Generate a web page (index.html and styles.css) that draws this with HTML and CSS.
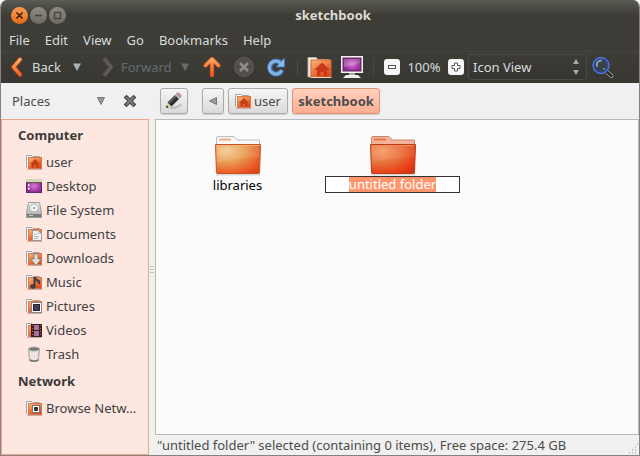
FILE: index.html
```html
<!DOCTYPE html>
<html lang="en">
<head>
<meta charset="utf-8">
<title>sketchbook</title>
<link rel="stylesheet" href="styles.css">
</head>
<body>
<svg class="defs" aria-hidden="true">
  <defs>
    <linearGradient id="orange" x1="0" y1="0" x2="0.6" y2="1"><stop offset="0" stop-color="#f8b77d"/><stop offset="0.5" stop-color="#ee8146"/><stop offset="1" stop-color="#e04a18"/></linearGradient>
    <linearGradient id="arrow" gradientUnits="userSpaceOnUse" x1="0" y1="2" x2="0" y2="20"><stop offset="0" stop-color="#fbb16b"/><stop offset="1" stop-color="#f05a20"/></linearGradient>
    <radialGradient id="purple"><stop offset="0" stop-color="#df78d8"/><stop offset="1" stop-color="#8c2c91"/></radialGradient>
    <linearGradient id="metal" x1="0" y1="0" x2="0" y2="1"><stop offset="0" stop-color="#f5f5f3"/><stop offset="1" stop-color="#a5a5a3"/></linearGradient>
    <radialGradient id="folderGlow" cx="0.25" cy="0.22" r="0.95"><stop offset="0" stop-color="#f5cd93"/><stop offset="0.45" stop-color="#e89850"/><stop offset="0.85" stop-color="#ea5522"/><stop offset="1" stop-color="#d8481a"/></radialGradient>
    <radialGradient id="folderHot" cx="0.25" cy="0.22" r="0.95"><stop offset="0" stop-color="#f59a66"/><stop offset="0.45" stop-color="#e8703a"/><stop offset="0.85" stop-color="#e83c14"/><stop offset="1" stop-color="#d63410"/></radialGradient>
    <symbol id="place" viewBox="0 0 16 16">
      <path d="M.5 13.500V1.500H6l1 1h6.500V6" fill="#fff" stroke="#a9a09c"/>
      <rect x="2.500" y="3.500" width="13" height="11" fill="url(#orange)" stroke="#d87950"/>
      <path d="M1 15.500h15" stroke="#c9b0a6"/>
    </symbol>
    <symbol id="home" viewBox="0 0 16 16"><use href="#place"/><path d="M9 5l5 5h-1.500v3.500h-2.500v-2.500h-2v2.500H5.500V10H4z" fill="#c33d16"/></symbol>
  </defs>
</svg>
<div class="window">
  <header class="titlebar">
    <div class="controls">
      <button class="control close" aria-label="Close"><svg width="17" height="17" viewBox="0 0 17 17"><path d="M5.500 5.500l6 6m0-6l-6 6" stroke="#301b0d" stroke-width="1.500"/></svg></button>
      <button class="control" aria-label="Minimize"><svg width="17" height="17" viewBox="0 0 17 17"><path d="M5 8.500h7" stroke="#44433e" stroke-width="1.400"/></svg></button>
      <button class="control" aria-label="Maximize"><svg width="17" height="17" viewBox="0 0 17 17"><rect x="5.500" y="5.500" width="6" height="6" fill="none" stroke="#44433e" stroke-width="1.400"/></svg></button>
    </div>
    <h1 class="title">sketchbook</h1>
    <div></div>
  </header>
  <nav class="menubar" aria-label="Menu">
    <button>File</button><button>Edit</button><button>View</button><button>Go</button><button>Bookmarks</button><button>Help</button>
  </nav>
  <div class="toolbar">
    <button class="nav back"><svg width="14" height="20" viewBox="0 0 14 20"><path d="M11 2.500L4.500 10l6.500 7.500" fill="none" stroke="#c54316" stroke-width="4.500" stroke-linecap="round" stroke-linejoin="round"/><path d="M11 2.500L4.500 10l6.500 7.500" fill="none" stroke="url(#arrow)" stroke-width="3" stroke-linecap="round" stroke-linejoin="round"/></svg><span>Back</span></button>
    <button class="drop" aria-label="Back history"><svg width="8" height="8" viewBox="0 0 8 8"><path d="M0 .5h8L4 8z" fill="#a9b3b5"/></svg></button>
    <button class="nav forward" disabled><svg width="14" height="20" viewBox="0 0 14 20"><path d="M4 2.500l6 7.500-6 7.500" fill="none" stroke="#5e5954" stroke-width="4" stroke-linecap="round" stroke-linejoin="round"/></svg><span>Forward</span></button>
    <button class="drop" aria-label="Forward history" disabled><svg width="8" height="8" viewBox="0 0 8 8"><path d="M0 .5h8L4 8z" fill="#626d70"/></svg></button>
    <button class="tool" aria-label="Up"><svg width="20" height="24" viewBox="0 0 20 24"><path d="M3.500 10.500L10 4l6.500 6.500M10 5v15" fill="none" stroke="#c54b1d" stroke-width="4.400" stroke-linecap="round" stroke-linejoin="round"/><path d="M3.500 10.500L10 4l6.500 6.500M10 5v15" fill="none" stroke="url(#arrow)" stroke-width="3" stroke-linecap="round" stroke-linejoin="round"/></svg></button>
    <button class="tool" aria-label="Stop" disabled><svg width="22" height="22" viewBox="0 0 22 22"><circle cx="11" cy="11" r="9.500" fill="#544f4b" stroke="#625c57"/><path d="M7 7l8 8m0-8l-8 8" stroke="#8f8b86" stroke-width="2.600"/></svg></button>
    <button class="tool" aria-label="Reload"><svg width="20" height="22" viewBox="0 0 20 22"><path d="M15 7A6.500 6.500 0 1 0 16 14.500" fill="none" stroke="#3f79b6" stroke-width="5"/><path d="M18.500 2v9H10z" fill="#8dbbeb" stroke="#3f79b6"/><path d="M14.500 7A6.500 6.500 0 1 0 15.800 14" fill="none" stroke="#83b3e6" stroke-width="3.200"/></svg></button>
    <i class="separator"></i>
    <button class="tool" aria-label="Home"><svg width="26" height="24" viewBox="0 0 26 24"><path d="M1 22V2.500h8l2 2h10.500V8H4v14z" fill="#f3f1ee" stroke="#b8aaa1"/><rect x="4" y="5" width="20" height="17.500" fill="url(#orange)" stroke="#df652f"/><path d="M4 22.500h20" stroke="#e9ded4"/><path d="M15 7.500l8 7.500h-3v6h-3.500v-4h-3v4H10v-6H7z" fill="#c83a18"/></svg></button>
    <button class="tool" aria-label="Computer"><svg width="24" height="24" viewBox="0 0 24 24"><rect x="1" y="1" width="22" height="17" fill="#f3f3f1"/><rect x="3" y="3" width="18" height="13" fill="url(#purple)" stroke="#682168"/><path d="M4 4h16v4L4 12z" fill="#fff" opacity=".18"/><path d="M9 18h6v2H9z" fill="#aaa"/><path d="M6 20h12l3 3H3z" fill="#f0f0ee"/></svg></button>
    <i class="separator"></i>
    <button class="zoom" aria-label="Zoom out"><svg width="16" height="16" viewBox="0 0 16 16"><rect x="4.500" y="6.500" width="7" height="3" fill="#fff" stroke="#555"/></svg></button>
    <span class="percent">100%</span>
    <button class="zoom" aria-label="Zoom in"><svg width="16" height="16" viewBox="0 0 16 16"><path d="M6.500 4h3v2.500H12v3H9.500V12h-3V9.500H4v-3h2.500z" fill="#fff" stroke="#555"/></svg></button>
    <label class="view"><select aria-label="View mode"><option>Icon View</option><option>List View</option><option>Compact View</option></select><svg width="6" height="16" viewBox="0 0 6 16"><path d="M3 0l3 5H0zM0 11h6l-3 5z" fill="#a5adae"/></svg></label>
    <button class="tool" aria-label="Search"><svg width="24" height="24" viewBox="0 0 24 24"><path d="M15 16l5.500 5" stroke="#aaa" stroke-width="4" stroke-linecap="round"/><path d="M15.500 16.500l5 4.500" stroke="#25282c" stroke-width="2.500" stroke-linecap="round"/><circle cx="10" cy="10.500" r="7.500" fill="#394149" stroke="#254bb0" stroke-width="2.400"/><circle cx="10" cy="10.500" r="8" fill="none" stroke="#7292dc" stroke-width=".8"/><path d="M6 11q-1-5 4-5.500" fill="none" stroke="#899aa9" stroke-width="2" stroke-linecap="round"/><circle cx="13" cy="14" r="1.200" fill="#697986"/></svg></button>
  </div>
  <div class="body">
    <aside class="side">
      <div class="sidehead">
        <button class="chooser"><span>Places</span><svg width="8" height="8" viewBox="0 0 8 8"><path d="M.5.500h7L4 7.500z" fill="#999" stroke="#777"/></svg></button>
        <button class="hide" aria-label="Close sidebar"><svg width="14" height="14" viewBox="0 0 14 14"><path d="M3.500 3.500l7 7m0-7l-7 7" stroke="#484b4b" stroke-width="4" stroke-linecap="square"/><path d="M3 3l8 8m0-8l-8 8" stroke="#777a7a" stroke-width="2"/></svg></button>
      </div>
      <nav class="places" aria-label="Places">
        <h2>Computer</h2>
        <a href="#"><svg viewBox="0 0 16 16"><use href="#home"/></svg><span>user</span></a>
        <a href="#"><svg viewBox="0 0 16 16"><rect x=".5" y="1.500" width="15" height="13" fill="url(#purple)" stroke="#6b236f"/><path d="M0 1h16v3H0z" fill="#d8d5bd"/><path d="M0 4.500h16" stroke="#59632d"/><path d="M2 6h1.500v2H2zm0 3.500h1.500v2H2z" fill="#fff"/></svg><span>Desktop</span></a>
        <a href="#"><svg viewBox="0 0 16 16"><path d="M2.500.500h11l2 11v4H.5v-4z" fill="url(#metal)" stroke="#999b99"/><ellipse cx="8" cy="6" rx="4.500" ry="4" fill="#f0f0ed" stroke="#aaa"/><circle cx="8" cy="6" r="1" fill="#999"/><path d="M1 12h14v3H1z" fill="#777a78"/><path d="M3 13.500h4" stroke="#ccc"/></svg><span>File System</span></a>
        <a href="#"><svg viewBox="0 0 16 16"><use href="#place"/><path d="M6.500 4.500h6l3 3v7h-9z" fill="#f3f3f1" stroke="#999"/><path d="M12.500 4.500v3h3M8 8h3m-3 2.500h5m-5 2h4" fill="none" stroke="#b3b3b1"/></svg><span>Documents</span></a>
        <a href="#"><svg viewBox="0 0 16 16"><use href="#place"/><path d="M8 4h4v5h3.500L10 15.500 4.500 9H8z" fill="#dededb" stroke="#777" stroke-width=".8"/></svg><span>Downloads</span></a>
        <a href="#"><svg viewBox="0 0 16 16"><use href="#place"/><path d="M8.500 12V3q1 3 4.500 4v3" fill="none" stroke="#343636" stroke-width="1.800"/><ellipse cx="7" cy="12.500" rx="2.700" ry="2.200" fill="#3d4141"/><path d="M9 3v3l4 4V6z" fill="#454848"/></svg><span>Music</span></a>
        <a href="#"><svg viewBox="0 0 16 16"><use href="#place"/><rect x="5.500" y="4.500" width="10" height="10" fill="#fff" stroke="#888"/><rect x="7.500" y="6.500" width="6" height="6" fill="#4b3b61" stroke="#292433"/></svg><span>Pictures</span></a>
        <a href="#"><svg viewBox="0 0 16 16"><use href="#place"/><path d="M5 2h11v13H5z" fill="#3b201d"/><path d="M8 3h5v5H8zm0 6h5v5H8z" fill="#a573a3"/><path d="M6.500 3v12M14.500 3v12" stroke="#e85e2a" stroke-dasharray="1 2"/></svg><span>Videos</span></a>
        <a href="#"><svg viewBox="0 0 16 16"><path d="M2.500 3l1 11q4.500 2 9 0l1-11z" fill="#e2ddd8" stroke="#a4a4a1"/><path d="M4.500 6v7M7 6v8M9.500 6v8" stroke="#f9eee8"/><ellipse cx="8" cy="3" rx="5.500" ry="2" fill="#707673" stroke="#b5b8b5"/><path d="M3.500 14q4.500 2.500 9 0" fill="none" stroke="#777" stroke-width="1.500"/></svg><span>Trash</span></a>
        <h2>Network</h2>
        <a href="#"><svg viewBox="0 0 16 16"><use href="#place"/><rect x="6.500" y="5.500" width="7" height="7" fill="#fff" stroke="#777"/><path d="M8.500 7.500h3v3h-3z" fill="#303432" stroke="#303432"/></svg><span>Browse Netw…</span></a>
      </nav>
    </aside>
    <div class="splitter"><i></i><i></i><i></i></div>
    <main class="main">
      <div class="pathbar">
        <button class="path edit" aria-label="Edit location"><svg width="20" height="20" viewBox="0 0 20 20"><path d="M6 17q9 0 11-4" fill="none" stroke="#bdbdbd" stroke-width="2"/><path d="M2 17l1.500-5.500 4 4z" fill="#e9dc8e"/><path d="M2 17l.8-2.800 2 2z" fill="#222"/><path d="M3.500 11.500L11 4l4 4-7.500 7.500z" fill="#2e3030"/><path d="M5 12l7-7" stroke="#6b6e6c" stroke-width="1.200"/><path d="M11 4l1.500-1.500 4 4L15 8z" fill="#b9bab6"/><path d="M12.500 2.500q1.500-1.500 3.500.500t.5 3.500z" fill="#dd93c6" stroke="#b973a2" stroke-width=".8"/></svg></button>
        <button class="path prev" aria-label="Previous folders"><svg width="8" height="8" viewBox="0 0 8 8"><path d="M7.500.500v7L.5 4z" fill="#9b9b9b" stroke="#777"/></svg></button>
        <button class="path user"><svg width="16" height="16"><use href="#home"/></svg><span>user</span></button>
        <button class="path current">sketchbook</button>
      </div>
      <section class="files" aria-label="Files">
        <div class="file">
          <svg width="48" height="40" viewBox="0 0 48 40"><path d="M2 38.500h44" stroke="#d8d8d8" stroke-width="2"/><path d="M2.500 12V2q0-1.500 1.500-1.500h15q1 0 2 1l2 2.500h22.500v8z" fill="#f8f8f8" stroke="#bcbcbc"/><path d="M5 3.500h12" stroke="#f2ab7c" stroke-width="2"/><path d="M1.500 8.500h45l-1 28.500q0 .5-1 .5h-41q-1 0-1-1z" fill="url(#folderGlow)" stroke="#c85420"/><path d="M2.500 9.500h43v12Q24 21 3 27z" fill="#fff" opacity=".09"/><path d="M2.500 9.500h43" stroke="#f7b47e"/></svg>
          <span class="name">libraries</span>
        </div>
        <div class="file">
          <svg width="48" height="40" viewBox="0 0 48 40"><path d="M2 38.500h44" stroke="#d8d8d8" stroke-width="2"/><path d="M2.500 12V2q0-1.500 1.500-1.500h15q1 0 2 1l2 2.500h22.500v8z" fill="#f4b29a" stroke="#c78771"/><path d="M5 3.500h12" stroke="#ed7447" stroke-width="2"/><path d="M1.500 8.500h45l-1 28.500q0 .5-1 .5h-41q-1 0-1-1z" fill="url(#folderHot)" stroke="#b83d18"/><path d="M2.500 9.500h43v12Q24 21 3 27z" fill="#fff" opacity=".08"/><path d="M2.500 9.500h43" stroke="#f08858"/></svg>
          <label class="rename"><input type="text" value="untitled folder" aria-label="Folder name"></label>
        </div>
      </section>
      <footer class="status"><span>"untitled folder" selected (containing 0 items), Free space: 275.4 GB</span><svg width="12" height="12" viewBox="0 0 12 12"><path d="M10 1h1M8 4h3M5 7h6M2 10h9" stroke="#999" stroke-width="1" stroke-dasharray="1 2"/></svg></footer>
    </main>
  </div>
</div>
</body>
</html>
```
FILE: styles.css
```css
* { box-sizing: border-box; }
body { margin: 0; background: #fff; color: #4c4c4c; font: 13px/18px "Noto Sans", sans-serif; }
button, input, select { font: inherit; color: inherit; border: 0; padding: 0; margin: 0; background: none; }
button { display: flex; align-items: center; justify-content: center; }
svg { display: block; flex: none; }
h1, h2 { margin: 0; font-size: 13px; font-weight: 700; }
.defs { position: absolute; width: 0; height: 0; }
.window { display: flex; flex-direction: column; min-height: 100vh; border: solid #858184; border-width: 0 1px 1px; border-radius: 7px 7px 0 0; overflow: hidden; background: #f0f0f0; }

.titlebar { display: grid; grid-template-columns: 1fr auto 1fr; align-items: center; height: 30px; padding-left: 10px; background: linear-gradient(#5b5a53, #3d3c37 50%); }
.controls { display: flex; gap: 2px; }
.control { width: 17px; height: 17px; border-radius: 50%; background: linear-gradient(#8c8a82, #6c6a63); }
.control.close { background: linear-gradient(#fa9a54, #e46a18); }
.title { padding-left: 16px; color: #dfdbd2; }

.menubar { display: flex; gap: 15px; height: 21px; padding: 0 0 1px 8px; background: #3d3c37; color: #d6dddd; }
.toolbar { display: flex; align-items: center; height: 32px; padding: 0 0 1px 8px; border-top: 1px solid #45443f; background: linear-gradient(#3d3c37, #383732); color: #d6dddd; }
.nav { gap: 9px; justify-content: flex-start; }
.back { width: 60px; }
.forward { width: 76px; gap: 6px; margin-left: 16px; color: #626d70; }
.drop { width: 16px; height: 24px; }
.tool { width: 32px; height: 28px; }
.forward + .drop { margin-right: 3px; }
.separator { width: 1px; height: 16px; margin: 0 5px; background: #2d2c28; border-right: 1px solid #4b4a45; }
.separator + .tool { margin-left: 1px; }
.zoom { width: 16px; height: 16px; margin-left: 5px; border-radius: 3px; background: #f7f7f7; }
.percent { width: 48px; text-align: center; }
.percent + .zoom { margin-left: 0; }
.view { display: flex; align-items: center; width: 119px; height: 26px; margin-left: 4px; padding: 0 7px 0 4px; border: 1px solid #4b4a45; border-radius: 3px; background: linear-gradient(#3c3b37, #35342f); }
.view select { flex: 1; appearance: none; }

.body { display: flex; flex: 1; }
.side { display: flex; flex-direction: column; flex: none; width: 148px; }
.sidehead { display: flex; align-items: center; height: 36px; padding: 0 12px 0 11px; }
.chooser { flex: 1; justify-content: space-between; }
.hide { margin-left: 18px; }
.places { flex: 1; border: 1px solid #eba88c; background: #fde7e0; color: #404040; }
.places h2 { padding-left: 16px; line-height: 30px; color: #3a3a3a; }
.places a { display: flex; align-items: center; gap: 4px; height: 24px; padding: 0 8px 0 24px; color: inherit; text-decoration: none; }
.places a svg { width: 16px; height: 16px; }
.places span { white-space: nowrap; }
.splitter { display: flex; flex-direction: column; justify-content: center; gap: 2px; width: 6px; padding: 0 1px; }
.splitter i { height: 1px; background: #c4c4c4; }

.main { display: flex; flex: 1; flex-direction: column; min-width: 0; }
.pathbar { display: flex; align-items: center; height: 36px; padding-left: 5px; }
.path { height: 26px; border: 1px solid #aaa; border-radius: 3px; background: linear-gradient(#f6f6f6, #dadada); box-shadow: 0 1px 1px #ccc; }
.edit { width: 28px; }
.prev { width: 22px; margin-left: 14px; }
.user { width: 60px; margin-left: 4px; gap: 3px; }
.current { width: 88px; margin-left: 4px; border-color: #e0936f; background: linear-gradient(#ffd2c1, #ffae91); font-weight: 700; }
.files { display: grid; grid-template-columns: repeat(auto-fill, 155px); align-content: start; flex: 1; padding: 16px 4px; border: 1px solid #b9b9b9; background: #fbfbfb; }
.file { display: flex; flex-direction: column; align-items: center; color: #000; }
.name { line-height: 18px; }
.rename { display: flex; justify-content: center; width: 135px; height: 17px; border: 1px solid #333; background: #fff; }
.rename input { field-sizing: content; height: 15px; line-height: 15px; background: #ff956d; color: #fff; outline: 0; }
.status { display: flex; justify-content: space-between; align-items: center; height: 20px; padding-left: 2px; }
.status svg { align-self: flex-end; }
```
